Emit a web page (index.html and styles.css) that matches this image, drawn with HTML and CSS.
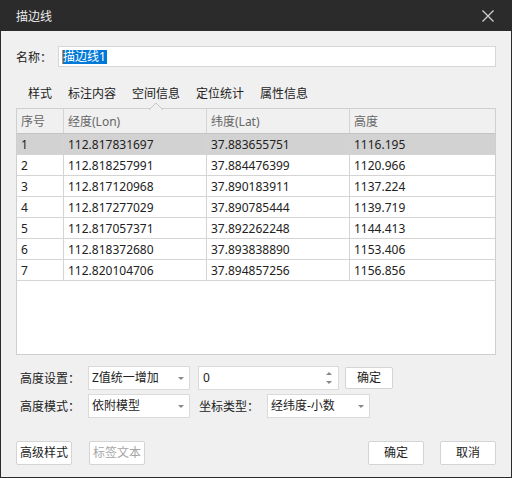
FILE: index.html
```html
<!DOCTYPE html>
<html lang="zh-CN">
<head>
    <meta charset="UTF-8">
    <title>描边线</title>
    <link rel="stylesheet" href="styles.css">
</head>
<body>
    <div class="dialog">
        <div class="titlebar">
            <span class="title">描边线</span>
            <svg class="close" width="12" height="12" viewBox="0 0 12 12">
                <path d="M0.5 0.5 L11.5 11.5 M11.5 0.5 L0.5 11.5" stroke="#cfcfcf" stroke-width="1.3" fill="none"/>
            </svg>
        </div>
        <div class="content">
            <div class="name-row">
                <span class="label-name">名称：</span>
                <div class="textbox"><span class="caret"></span><span class="selected">描边线1</span></div>
            </div>
            <div class="tabs">
                <div class="tab">样式</div>
                <div class="tab">标注内容</div>
                <div class="tab active">空间信息
                    <svg class="notch" width="14" height="8" viewBox="0 0 14 8">
                        <path d="M0 8 L7 1 L14 8 Z" fill="#f0f0f0"/>
                        <path d="M0 8 L7 1 L14 8" stroke="#c8c8c8" stroke-width="1" fill="none"/>
                    </svg>
                </div>
                <div class="tab">定位统计</div>
                <div class="tab">属性信息</div>
            </div>
            <div class="grid">
                <table>
                    <thead>
                        <tr><th class="c1">序号</th><th class="c2">经度(Lon)</th><th class="c3">纬度(Lat)</th><th class="c4">高度</th></tr>
                    </thead>
                    <tbody>
                        <tr class="current"><td>1</td><td>112.817831697</td><td>37.883655751</td><td>1116.195</td></tr>
                        <tr><td>2</td><td>112.818257991</td><td>37.884476399</td><td>1120.966</td></tr>
                        <tr><td>3</td><td>112.817120968</td><td>37.890183911</td><td>1137.224</td></tr>
                        <tr><td>4</td><td>112.817277029</td><td>37.890785444</td><td>1139.719</td></tr>
                        <tr><td>5</td><td>112.817057371</td><td>37.892262248</td><td>1144.413</td></tr>
                        <tr><td>6</td><td>112.818372680</td><td>37.893838890</td><td>1153.406</td></tr>
                        <tr><td>7</td><td>112.820104706</td><td>37.894857256</td><td>1156.856</td></tr>
                    </tbody>
                </table>
            </div>
            <div class="form-row first">
                <span class="label">高度设置：</span>
                <div class="combo">Z值统一增加<span class="arrow"></span></div>
                <div class="spin">0
                    <span class="spin-btns"><span class="up"></span><span class="down"></span></span>
                </div>
                <div class="btn small">确定</div>
            </div>
            <div class="form-row">
                <span class="label">高度模式：</span>
                <div class="combo">依附模型<span class="arrow"></span></div>
                <span class="label second">坐标类型：</span>
                <div class="combo wide">经纬度-小数<span class="arrow"></span></div>
            </div>
            <div class="footer">
                <div class="btn">高级样式</div>
                <div class="btn disabled">标签文本</div>
                <div class="spacer"></div>
                <div class="btn">确定</div>
                <div class="btn">取消</div>
            </div>
        </div>
    </div>
</body>
</html>
```

FILE: styles.css
```css
body {
    margin: 0;
    font-family: "Noto Sans", "Noto Sans CJK SC", sans-serif;
    font-size: 12px;
    color: #222;
}
.dialog {
    width: 512px;
    height: 478px;
    box-sizing: border-box;
    border: 1px solid #2b2b2b;
    border-top: none;
    background-color: #f0f0f0;
    display: flex;
    flex-direction: column;
}
.titlebar {
    height: 31px;
    margin: 0 -1px;
    background-color: #2b2b2b;
    color: #ececec;
    display: flex;
    align-items: center;
    justify-content: space-between;
    padding: 0 18px 0 16px;
}
.title {
    font-size: 12px;
}
.content {
    padding: 0 15px;
    display: flex;
    flex-direction: column;
}
.name-row {
    margin-top: 15px;
    display: flex;
    align-items: center;
}
.label-name {
    width: 42px;
}
.textbox {
    flex: 1;
    height: 21px;
    box-sizing: border-box;
    border: 1px solid #d6d6d6;
    background-color: #fff;
    display: flex;
    align-items: center;
    padding-left: 3px;
}
.caret {
    width: 1px;
    height: 14px;
    background-color: #f08020;
}
.selected {
    background-color: #0078d7;
    color: #fff;
    height: 14px;
    line-height: 14px;
    padding-right: 1px;
}
.tabs {
    margin-top: 13px;
    height: 28px;
    display: flex;
    padding-left: 4px;
}
.tab {
    position: relative;
    padding: 0 8px;
    line-height: 27px;
    font-size: 12px;
}
.notch {
    position: absolute;
    left: 50%;
    bottom: -2px;
    margin-left: -7px;
    z-index: 2;
}
.grid {
    height: 247px;
    box-sizing: border-box;
    border: 1px solid #cfcfcf;
    background-color: #fff;
}
table {
    width: 100%;
    border-collapse: collapse;
    table-layout: fixed;
}
th {
    height: 24px;
    background-color: #f0f0f0;
    color: #666;
    font-weight: normal;
    text-align: left;
    padding: 0 4px;
    border-right: 1px solid #d4d4d4;
    border-bottom: 1px solid #c4c4c4;
}
th.c1 { width: 38px; }
th.c2 { width: 134px; }
th.c3 { width: 134px; }
th.c4 { border-right: none; }
td {
    height: 20px;
    padding: 0 4px;
    border-right: 1px solid #d4d4d4;
    border-bottom: 1px solid #d4d4d4;
    white-space: nowrap;
}
td:last-child {
    border-right: none;
}
tr.current td {
    background-color: #d2d2d2;
}
.form-row {
    display: flex;
    align-items: center;
    height: 24px;
    margin-top: 4px;
    padding-left: 4px;
}
.form-row.first {
    margin-top: 11px;
}
.label {
    width: 68px;
}
.label.second {
    margin-left: 9px;
}
.combo {
    position: relative;
    width: 102px;
    height: 24px;
    box-sizing: border-box;
    border: 1px solid #dadada;
    background-color: #fff;
    padding-left: 3px;
    line-height: 22px;
}
.combo.wide {
    width: 103px;
}
.arrow {
    position: absolute;
    right: 5px;
    top: 10px;
    border-left: 3px solid transparent;
    border-right: 3px solid transparent;
    border-top: 3px solid #888;
}
.spin {
    position: relative;
    width: 141px;
    height: 24px;
    box-sizing: border-box;
    margin-left: 8px;
    border: 1px solid #dadada;
    background-color: #fff;
    padding-left: 4px;
    line-height: 22px;
}
.spin-btns .up,
.spin-btns .down {
    position: absolute;
    right: 6px;
    border-left: 3px solid transparent;
    border-right: 3px solid transparent;
}
.spin-btns .up {
    top: 5px;
    border-bottom: 3px solid #888;
}
.spin-btns .down {
    bottom: 5px;
    border-top: 3px solid #888;
}
.btn {
    width: 56px;
    height: 24px;
    box-sizing: border-box;
    border: 1px solid #d4d4d4;
    border-radius: 2px;
    background-color: #fff;
    text-align: center;
    line-height: 22px;
}
.btn.small {
    width: 48px;
    height: 22px;
    line-height: 20px;
    margin-left: 6px;
}
.btn.disabled {
    color: #a6a6a6;
    margin-left: 17px;
}
.footer {
    display: flex;
    margin-top: 23px;
}
.spacer {
    flex: 1;
}
.footer .btn:last-child {
    margin-left: 16px;
}
```
